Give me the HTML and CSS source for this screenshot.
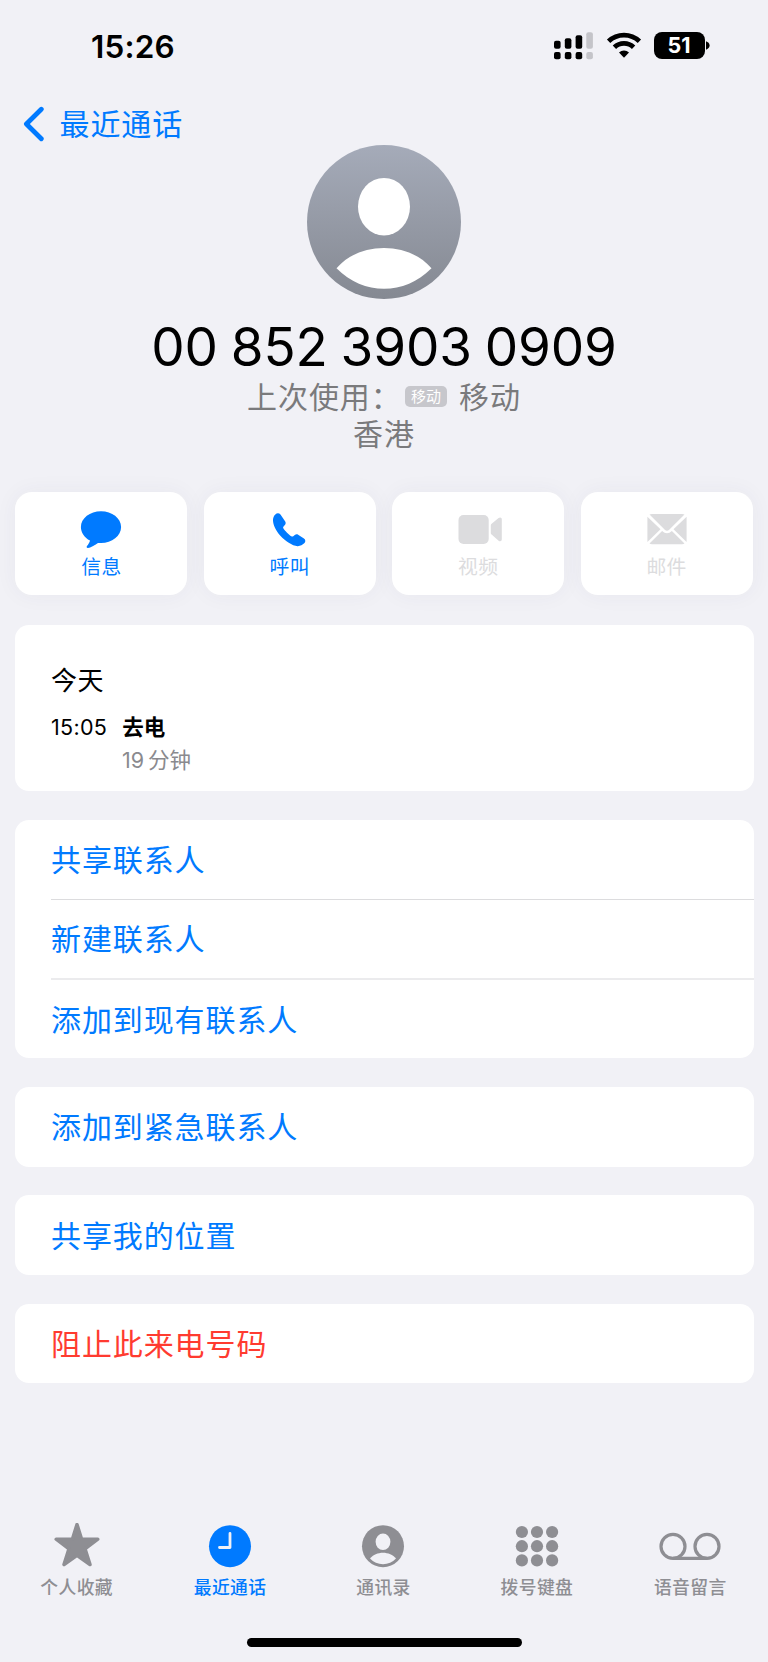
FILE: index.html
```html
<!DOCTYPE html>
<html lang="zh-CN">
<head>
<meta charset="utf-8">
<title>最近通话</title>
<link rel="stylesheet" href="styles.css">
</head>
<body>
<div class="screen">
  <header class="status">
    <span class="time">15:26</span>
    <div class="indicators">
      <svg class="signal" width="40" height="28" viewBox="0 0 40 28">
        <rect x="1" y="8.7" width="6.6" height="8" rx="2"/>
        <rect x="11.8" y="6.3" width="6.6" height="10.4" rx="2"/>
        <rect x="22.6" y="3.3" width="6.6" height="13.4" rx="2"/>
        <rect x="33.3" y="0.3" width="6.6" height="16.4" rx="2" class="dim"/>
        <rect x="1" y="20" width="6.6" height="7.2" rx="2"/>
        <rect x="11.8" y="20" width="6.6" height="7.2" rx="2"/>
        <rect x="22.6" y="20" width="6.6" height="7.2" rx="2"/>
        <rect x="33.3" y="20" width="6.6" height="7.2" rx="2" class="dim"/>
      </svg>
      <svg class="wifi" width="36" height="26" viewBox="0 0 36 26">
        <path d="M2.6 9.3A22.3 22.3 0 0 1 33.4 9.3M8.4 15.3A13.8 13.8 0 0 1 27.6 15.3" fill="none" stroke="#000" stroke-width="4.8"/>
        <path d="M18 25.7l-5-5.2a7.2 7.2 0 0 1 10 0z"/>
      </svg>
      <div class="battery"><span class="level">51</span><svg width="4" height="9" viewBox="0 0 4 9"><path d="M0 0.3C2 1 3.6 2.5 3.6 4.5S2 8 0 8.7z"/></svg></div>
    </div>
  </header>

  <nav class="back">
    <svg width="22" height="36" viewBox="0 0 22 36"><path d="M18.3 3.2L3.4 18 18.3 32.8" fill="none" stroke="#007aff" stroke-width="4.8" stroke-linecap="round" stroke-linejoin="round"/></svg>
    <span>最近通话</span>
  </nav>

  <section class="profile">
    <svg class="avatar" width="154" height="154" viewBox="0 0 154 154">
      <defs><linearGradient id="shade" x1="0" y1="0" x2="0" y2="1"><stop offset="0" stop-color="#a5abb9"/><stop offset="1" stop-color="#858992"/></linearGradient></defs>
      <circle cx="77" cy="77" r="77" fill="url(#shade)"/>
      <ellipse cx="77" cy="61.7" rx="26" ry="28.8" fill="#fff"/>
      <path d="M29.5 123.2C41 110 58 103 77 103s36 7 47.500 20.200C111 137 94 143.700 77 143.700S43 137 29.500 123.200z" fill="#fff"/>
    </svg>
    <h1 class="number">00 852 3903 0909</h1>
    <div class="last-used"><span>上次使用：</span><span class="badge">移动</span><span>移动</span></div>
    <div class="region">香港</div>
  </section>

  <section class="actions">
    <div class="action">
      <svg width="42" height="40" viewBox="0 0 42 40"><path d="M21 2.200C32 2.200 41.100 9.200 41.100 18S32 34 21 34C19.800 34 18.800 34 18 33.900C14.500 36.500 10.500 38.600 8 38.900C6.600 39 6.200 38 7 37C8.400 35.500 9.600 33.500 10 31.600C4.500 28.600 .9 23.700 .9 18C.9 9.200 10 2.200 21 2.200z"/></svg>
      <span>信息</span>
    </div>
    <div class="action">
      <svg width="42" height="40" viewBox="0 0 42 40"><path d="M5.800 6.300C7.300 4.600 9.900 4.500 11.300 6.300L16.400 13.600C17.200 14.900 17 16.200 16 17.300L14.600 18.900C14 19.600 14 20.200 14.500 21C16 23.400 20.400 27.700 22.900 29.200C23.700 29.600 24.300 29.600 25 29L26.600 27.700C27.700 26.800 28.900 26.600 30.200 27.400L36.400 31.500C38.400 32.900 38.300 35.100 36.700 36.600C34.900 38.300 32.600 39.600 29.500 39.500C24 39.300 16.300 34 11.200 28.600C6.700 23.800 3.300 17.400 3.300 12.300C3.300 9.700 4.200 7.700 5.800 6.300z" transform="translate(.9 -.4) scale(.935 .95)"/></svg>
      <span>呼叫</span>
    </div>
    <div class="action off">
      <svg width="50" height="40" viewBox="0 0 50 40"><rect x="5.500" y="6" width="30.200" height="29" rx="5"/><path d="M37.800 16.500Q37.800 15.500 38.600 14.800L45.600 9C47.200 7.900 48.800 8.500 48.800 10.400V30.300C48.800 32.200 47.200 32.800 45.600 31.700L38.600 25.600Q37.800 25 37.800 24z"/></svg>
      <span>视频</span>
    </div>
    <div class="action off">
      <svg width="42" height="40" viewBox="0 0 42 40"><path d="M3.500 5.500Q4.500 5 6 5H36Q37.500 5 38.500 5.500L23.200 20.700Q21 22.700 18.800 20.700zM1.400 7.700L14.500 20.300L1.400 33.100zM40.600 7.700V33.100L27.500 20.300zM16.100 22Q21 26.600 25.900 22L38.500 34.500Q37.500 35.300 36 35.300H6Q4.500 35.300 3.500 34.500z"/></svg>
      <span>邮件</span>
    </div>
  </section>

  <main class="groups">
    <section class="card history">
      <h2>今天</h2>
      <div class="entry"><span class="at">15:05</span><b>去电</b></div>
      <div class="duration">19<span>分钟</span></div>
    </section>
    <section class="card">
      <div class="row">共享联系人</div>
      <div class="row">新建联系人</div>
      <div class="row">添加到现有联系人</div>
    </section>
    <section class="card"><div class="row">添加到紧急联系人</div></section>
    <section class="card"><div class="row">共享我的位置</div></section>
    <section class="card"><div class="row danger">阻止此来电号码</div></section>
  </main>

  <nav class="tabs">
    <div class="tab">
      <svg width="46" height="46" viewBox="0 0 46 46"><path d="M23 1.500L27.600 16.200H43.800L31 25.800L36 41.600L23 32.300L10 41.600L15 25.800L2.200 16.200H18.400z" stroke="#8e8e93" stroke-width="3.500" stroke-linejoin="round"/></svg>
      <span>个人收藏</span>
    </div>
    <div class="tab current">
      <svg width="46" height="46" viewBox="0 0 46 46"><circle cx="23" cy="23.200" r="21"/><path d="M23 10.500V24.500H12.500" fill="none" stroke="#f1f1f6" stroke-width="2.800" stroke-linecap="round" stroke-linejoin="round"/></svg>
      <span>最近通话</span>
    </div>
    <div class="tab">
      <svg width="46" height="46" viewBox="0 0 46 46"><circle cx="23" cy="23.200" r="21"/><ellipse cx="23" cy="18.800" rx="7.400" ry="8.300" fill="#f1f1f6"/><path d="M10 35.500C13 31.800 18 29.700 23 29.700S33 31.800 36 35.500C32.500 39.200 28 41.200 23 41.200S13.500 39.200 10 35.500z" fill="#f1f1f6"/></svg>
      <span>通讯录</span>
    </div>
    <div class="tab">
      <svg width="46" height="46" viewBox="0 0 46 46"><circle cx="7.900" cy="9" r="6.100"/><circle cx="23" cy="9" r="6.100"/><circle cx="38.100" cy="9" r="6.100"/><circle cx="7.900" cy="23.200" r="6.100"/><circle cx="23" cy="23.200" r="6.100"/><circle cx="38.100" cy="23.200" r="6.100"/><circle cx="7.900" cy="37.400" r="6.100"/><circle cx="23" cy="37.400" r="6.100"/><circle cx="38.100" cy="37.400" r="6.100"/></svg>
      <span>拨号键盘</span>
    </div>
    <div class="tab">
      <svg width="64" height="46" viewBox="0 0 64 46"><g fill="none" stroke="#8e8e93" stroke-width="3.200"><circle cx="15" cy="23.400" r="12"/><circle cx="49" cy="23.400" r="12"/><path d="M15 35.400H49"/></g></svg>
      <span>语音留言</span>
    </div>
  </nav>
  <div class="home"></div>
</div>
</body>
</html>
```

FILE: styles.css
```css
* { box-sizing: border-box; margin: 0; padding: 0; }
svg { display: block; flex: none; }
body { background: #f1f1f6; font-family: Inter, "Noto Sans CJK SC", sans-serif; color: #000; }
.screen { width: 768px; height: 1662px; display: flex; flex-direction: column; background: #f1f1f6; overflow: hidden; }

.status { height: 92px; flex: none; display: flex; justify-content: space-between; padding: 0 58px 0 91px; }
.time { font-size: 31.5px; font-weight: 600; line-height: 38px; padding-top: 28px; letter-spacing: .2px; }
.indicators { display: flex; align-items: flex-start; padding-top: 32px; }
.signal .dim { fill: #c4c4c9; }
.wifi { margin: 0 12px 0 13px; }
.battery { display: flex; align-items: center; gap: 1.5px; }
.level { width: 51px; height: 27px; border-radius: 8px; background: #000; color: #fff; font-size: 21.5px; font-weight: 700; line-height: 27px; text-align: center; }

.back { height: 53px; flex: none; display: flex; align-items: center; gap: 14.5px; padding: 10px 0 0 23px; color: #007aff; }
.back svg { margin-top: 1px; }
.back span { font-size: 30px; letter-spacing: .9px; line-height: 40px; padding-bottom: 3px; font-family: "Noto Sans CJK SC", sans-serif; }

.profile { height: 347px; flex: none; display: flex; flex-direction: column; align-items: center; }
.number { font-size: 53px; font-weight: 400; line-height: 60px; height: 60px; margin-top: 18px; letter-spacing: -.15px; word-spacing: -1.8px; white-space: nowrap; }
.last-used, .region { font-family: "Noto Sans CJK SC", sans-serif; font-size: 30px; line-height: 37px; letter-spacing: .9px; color: #7a7a7c; display: flex; align-items: center; }
.badge { width: 42px; height: 21px; border-radius: 5px; background: #c7c7cc; color: #fff; font-size: 15px; line-height: 20px; text-align: center; letter-spacing: 0; margin: 2px 12px 0 3.5px; }

.actions { display: grid; grid-template-columns: repeat(4, 172px); gap: 16.4px; margin: 0 15.4px; flex: none; }
.action { height: 103px; border-radius: 17px; background: #fff; box-shadow: 0 0 22px rgba(60, 60, 90, .05); display: flex; flex-direction: column; align-items: center; padding-top: 17px; color: #007aff; fill: #007aff; font-family: "Noto Sans CJK SC", sans-serif; font-size: 19.8px; line-height: 28px; letter-spacing: .4px; }
.action span { margin-top: 3px; }
.off { color: #dcdcde; fill: #dcdcde; }

.groups { display: flex; flex-direction: column; gap: 28.8px; margin: 29.5px 14.5px 0 15px; flex: none; }
.card { background: #fff; border-radius: 14px; overflow: hidden; }
.history { height: 166.5px; padding: 35px 36px 0; }
.history h2 { font-family: "Noto Sans CJK SC", sans-serif; font-size: 26px; font-weight: 400; line-height: 38px; letter-spacing: .6px; }
.entry { display: flex; align-items: center; gap: 15px; height: 33px; margin-top: 13px; font-size: 21.5px; }
.at { letter-spacing: .3px; }
.entry b { font-family: "Noto Sans CJK SC", sans-serif; line-height: 30px; padding-bottom: 2px; }
.duration { display: flex; align-items: center; gap: 4px; padding-left: 71px; height: 32px; color: #8a8a8e; font-size: 21.5px; }
.duration span { font-family: "Noto Sans CJK SC", sans-serif; line-height: 30px; padding-bottom: 2px; }
.row { height: 79.5px; margin-left: 36px; display: flex; align-items: center; padding-bottom: 3px; font-family: "Noto Sans CJK SC", sans-serif; font-size: 30px; letter-spacing: .9px; color: #007aff; }
.row:not(:last-child) { height: 79px; }
.row + .row { border-top: 1px solid #dcdcde; }
.row + .row:last-child { height: 80.5px; border-top: 2px solid #ebebed; }
.danger { color: #ff3b30; }

.tabs { display: grid; grid-template-columns: repeat(5, 1fr); margin-top: auto; padding-right: 1px; height: 113px; flex: none; color: #8e8e93; fill: #8e8e93; }
.tab { display: flex; flex-direction: column; align-items: center; font-family: "Noto Sans CJK SC", sans-serif; font-size: 17.8px; font-weight: 500; line-height: 24px; letter-spacing: .4px; }
.tab span { margin-top: 5px; }
.current { color: #007aff; fill: #007aff; }
.home { width: 275px; height: 9px; border-radius: 5px; background: #000; margin: 2px auto 15px; flex: none; }
```
